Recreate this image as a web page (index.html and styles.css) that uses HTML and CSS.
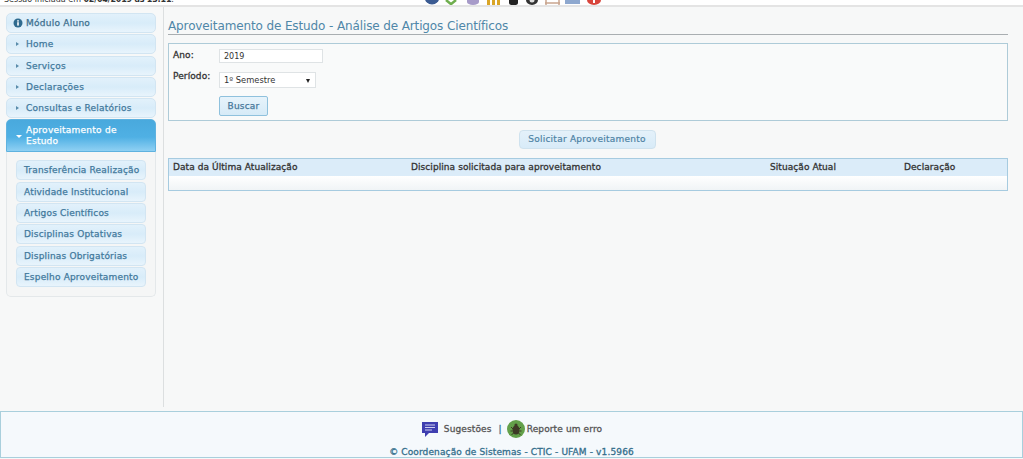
FILE: index.html
```html
<!DOCTYPE html>
<html lang="pt">
<head>
<meta charset="utf-8">
<title>Aproveitamento de Estudo</title>
<link rel="stylesheet" href="styles.css">
</head>
<body>
<header class="topbar">
  <span class="session">Sessão iniciada em <b>02/04/2019 às 13:11</b>.</span>
  <div class="top-icons">
    <svg class="ti ti-1" width="16" height="5" viewBox="0 0 16 5"><circle cx="8" cy="-3" r="7.500" fill="#3b5b92"/></svg>
    <svg class="ti ti-2" width="16" height="5" viewBox="0 0 16 5"><path d="M3 0l6 5M13 0L7 5" stroke="#6fae4e" stroke-width="2.500"/></svg>
    <svg class="ti ti-3" width="12" height="5" viewBox="0 0 12 5"><path d="M0 0h12v2a6 3 0 0 1-12 0z" fill="#a79bc9"/></svg>
    <svg class="ti ti-4" width="16" height="5" viewBox="0 0 16 5"><path d="M1 0h3v5H1zM6 0h3v5H6zM11 0h3v5h-3z" fill="#d9a526"/></svg>
    <svg class="ti ti-5" width="11" height="5" viewBox="0 0 11 5"><path d="M1 0h9v3a4 2 0 0 1-9 0z" fill="#222"/></svg>
    <svg class="ti ti-6" width="12" height="5" viewBox="0 0 12 5"><path d="M0 0h12a6 5 0 0 1-12 0z" fill="#333"/><circle cx="6" cy="0" r="2.500" fill="#ddd"/></svg>
    <svg class="ti ti-7" width="17" height="5" viewBox="0 0 17 5"><path d="M1 3h15M2 0v5M15 0v5" stroke="#c9a58f" stroke-width="1.500" fill="none"/></svg>
    <svg class="ti ti-8" width="15" height="5" viewBox="0 0 15 5"><rect width="15" height="4" fill="#8ea8cf"/></svg>
    <svg class="ti" width="14" height="5" viewBox="0 0 14 5"><path d="M0 0h14a7 5 0 0 1-14 0z" fill="#d8453c"/><rect x="6" width="2" height="3" fill="#fff"/></svg>
  </div>
</header>

<div class="main">
  <aside class="sidebar">
    <div class="nav-item nav-title">
      <svg class="info" width="10" height="10" viewBox="0 0 10 10"><circle cx="5" cy="5" r="4.5" fill="#2f6b8f"/><rect x="4.2" y="4.2" width="1.6" height="3.4" fill="#fff"/><rect x="4.2" y="2.2" width="1.6" height="1.4" fill="#fff"/></svg>
      <span>Módulo Aluno</span>
    </div>
    <div class="nav-item"><i class="arrow"></i><span>Home</span></div>
    <div class="nav-item"><i class="arrow"></i><span>Serviços</span></div>
    <div class="nav-item"><i class="arrow"></i><span>Declarações</span></div>
    <div class="nav-item"><i class="arrow"></i><span>Consultas e Relatórios</span></div>
    <div class="nav-item nav-active"><i class="arrow-down"></i><span class="nav-active-label">Aproveitamento de Estudo</span></div>
    <div class="subpanel">
      <div class="sub-item">Transferência Realização</div>
      <div class="sub-item">Atividade Institucional</div>
      <div class="sub-item">Artigos Científicos</div>
      <div class="sub-item">Disciplinas Optativas</div>
      <div class="sub-item">Displinas Obrigatórias</div>
      <div class="sub-item">Espelho Aproveitamento</div>
    </div>
  </aside>

  <main class="content">
    <h1 class="page-title">Aproveitamento de Estudo - Análise de Artigos Científicos</h1>
    <form class="filter">
      <div class="field field-ano">
        <label class="field-label">Ano:</label>
        <div class="fake-input">2019</div>
      </div>
      <div class="field field-periodo">
        <label class="field-label">Período:</label>
        <div class="fake-select"><span>1º Semestre</span><i class="select-arrow"></i></div>
      </div>
      <div class="btn-buscar">Buscar</div>
    </form>
    <div class="action-row"><div class="btn-solicitar">Solicitar Aproveitamento</div></div>
    <div class="table">
      <div class="table-head">
        <span class="col col-1">Data da Última Atualização</span>
        <span class="col col-2">Disciplina solicitada para aproveitamento</span>
        <span class="col col-3">Situação Atual</span>
        <span class="col col-4">Declaração</span>
      </div>
      <div class="table-body"></div>
    </div>
  </main>
</div>

<footer class="footer">
  <div class="footer-links">
    <svg width="18" height="17" viewBox="0 0 18 17"><path d="M1 1h16v11H8l-4 4v-4H1z" fill="#3f3fb0"/><path d="M4 4h10M4 6.500h10M4 9h7" stroke="#cfd0f0" stroke-width="1"/></svg>
    <span class="link link-s">Sugestões</span>
    <span class="sep">|</span>
    <svg class="bug" width="18" height="18" viewBox="0 0 18 18"><circle cx="9" cy="9" r="9" fill="#63a04a"/><ellipse cx="9" cy="10" rx="3.5" ry="4.5" fill="#3d3a26"/><circle cx="9" cy="5" r="1.6" fill="#3d3a26"/><path d="M4 7l2 2M14 7l-2 2M3.500 11h2M14.500 11h-2M4.500 15l2-2M13.500 15l-2-2" stroke="#3d3a26"/></svg>
    <span class="link">Reporte um erro</span>
  </div>
  <div class="copyright">© Coordenação de Sistemas - CTIC - UFAM - v1.5966</div>
</footer>
</body>
</html>
```
FILE: styles.css
```css
* { box-sizing: border-box; }
html, body { margin: 0; height: 459px; overflow: hidden; }
body {
  background: #f7f8f8;
  font-family: "DejaVu Sans", sans-serif;
  font-size: 9px;
  color: #333;
  display: flex;
  flex-direction: column;
}
.topbar {
  height: 7px;
  flex: none;
  background: #fff;
  border-bottom: 2px solid #e4e4e4;
  overflow: hidden;
  position: relative;
  padding-left: 4px;
}
.session { display: block; margin-top: -6px; line-height: 11px; font-size: 8px; color: #333; white-space: nowrap; }
.session b { font-weight: 700; letter-spacing: -.2px; }
.top-icons {
  position: absolute;
  top: 0;
  left: 424px;
  display: flex;
}
.ti-1 { margin-right: 3px; }
.ti-2 { margin-right: 8px; }
.ti-3 { margin-right: 7px; }
.ti-4 { margin-right: 6px; }
.ti-5 { margin-right: 7px; }
.ti-6 { margin-right: 6px; }
.ti-7 { margin-right: 4px; }
.ti-8 { margin-right: 7px; }
.main { flex: 1; display: flex; min-height: 0; height: 404px; }
.sidebar {
  width: 164px;
  flex: none;
  height: 400px;
  border-right: 1px solid #dcdfe0;
  padding: 6px 7px 0 6px;
}
.nav-item {
  height: 20px;
  margin-bottom: 1.3px;
  width: 150px;
  display: flex;
  align-items: center;
  border: 1px solid #d2e5f2;
  border-radius: 5px;
  background: linear-gradient(#e2f1fb, #d8ecf9 50%, #e8f4fc);
  color: #42799c;
  font-size: 9px;
  letter-spacing: .25px;
  -webkit-text-stroke: .25px currentColor;
  padding-left: 9px;
}
.nav-title { color: #3d6f8e; padding-left: 6px; }
.info { margin-right: 3px; }
.arrow {
  width: 0; height: 0; margin-right: 7px;
  border-left: 3px solid #5a8cab;
  border-top: 2.500px solid transparent;
  border-bottom: 2.500px solid transparent;
}
.nav-active {
  height: 33px;
  margin-bottom: 0;
  background: linear-gradient(#49a9dd, #4fb0e4 55%, #8fd0f3);
  border-color: #5fb2df;
  border-radius: 5px 5px 0 0;
  color: #fff;
  line-height: 11px;
  padding-top: 1px;
}
.nav-active-label { width: 110px; }
.arrow-down {
  width: 0; height: 0; margin-right: 4px; flex: none;
  border-top: 3px solid #fff;
  border-left: 3px solid transparent;
  border-right: 3px solid transparent;
}
.subpanel {
  width: 150px;
  height: 145px;
  padding: 8px 9px 0 9px;
  border: 1px solid #e4e8ea;
  border-top: none;
  border-radius: 0 0 5px 5px;
  background: #f5f6f6;
}
.sub-item {
  height: 20px;
  margin-bottom: 1.300px;
  border: 1px solid #d2e5f2;
  border-radius: 4px;
  background: linear-gradient(#e2f1fb, #d8ecf9 50%, #e8f4fc);
  color: #42799c;
  font-size: 9px;
  letter-spacing: .18px;
  -webkit-text-stroke: .25px currentColor;
  line-height: 18px;
  padding-left: 7px;
  white-space: nowrap;
}
.content { flex: 1; padding: 11px 15px 0 4px; min-width: 0; }
.page-title {
  margin: 0;
  height: 16px;
  font-size: 12px;
  font-weight: 400;
  line-height: 16px;
  color: #4f87a8;
  letter-spacing: -.12px;
  box-sizing: content-box;
  border-bottom: 1px solid #a9aeb1;
}
.filter {
  margin-top: 8px;
  height: 78px;
  border: 1px solid #aecbd8;
  background: #f9fafa;
  padding: 4px 4px 0 4px;
}
.field { display: flex; align-items: flex-start; }
.field-ano { height: 21px; }
.field-periodo { height: 26px; }
.field-label { width: 46px; color: #333; line-height: 15px; letter-spacing: .1px; -webkit-text-stroke: .3px currentColor; }
.fake-input {
  width: 104px; height: 14px; margin-top: 1px;
  border: 1px solid #dfe3e5; background: #fff;
  font-size: 8px; line-height: 14px; padding-left: 4px; color: #333;
}
.fake-select {
  width: 97px; height: 16px; margin-top: 3px;
  border: 1px solid #dfe3e5; background: #fff;
  font-size: 8.300px; line-height: 15px; padding: 1px 5px 0 4px; color: #333;
  display: flex; justify-content: space-between; align-items: center;
}
.select-arrow {
  width: 0; height: 0;
  border-top: 4px solid #222;
  border-left: 2.500px solid transparent;
  border-right: 2.500px solid transparent;
}
.btn-buscar {
  margin-left: 46px;
  margin-top: 1px;
  width: 49px; height: 20px;
  border: 1px solid #8fc1dd;
  border-radius: 2px;
  background: linear-gradient(#e7f3fb, #d6eaf7);
  color: #47789a;
  text-align: center;
  line-height: 18px;
  letter-spacing: .2px;
  -webkit-text-stroke: .25px currentColor;
}
.action-row { margin-top: 9px; display: flex; justify-content: center; padding-right: 2px; }
.btn-solicitar {
  width: 137px; height: 19px;
  border: 1px solid #cfe2ee;
  border-radius: 4px;
  background: linear-gradient(#e4f1fa, #d8ebf8);
  color: #4e83a5;
  text-align: center;
  line-height: 17px;
  letter-spacing: .25px;
  -webkit-text-stroke: .2px currentColor;
}
.table { margin-top: 9px; height: 33px; border: 1px solid #a6cbe0; background: #fff; }
.table-head {
  height: 17px;
  background: #dbecf9;
  position: relative;
  display: flex;
  line-height: 16px;
  color: #333;
  letter-spacing: .07px;
  -webkit-text-stroke: .3px currentColor;
}
.col { display: block; padding-left: 4px; white-space: nowrap; }
.col-1 { width: 238px; }
.col-2 { width: 359px; }
.col-3 { width: 134px; }
.table-body { height: 14px; background: linear-gradient(#fff, #f0f4f6); }
.footer {
  flex: none;
  height: 47px;
  border: 1px solid #a9cfdc;
  background: #f5f9fc;
  display: flex;
  flex-direction: column;
  align-items: center;
  margin-bottom: 1px;
}
.footer-links {
  display: flex;
  align-items: center;
  gap: 3px;
  height: 19px;
  margin-top: 8px;
  color: #555;
  letter-spacing: .12px;
  -webkit-text-stroke: .3px currentColor;
}
.link-s { margin-left: 2px; }
.sep { margin: 0 2px 0 4px; color: #336f8c; }
.bug { margin-right: -1px; }
.copyright {
  margin-top: 9px;
  color: #346f8c;
  line-height: 11px;
  letter-spacing: .13px;
  -webkit-text-stroke: .3px currentColor;
}
```
